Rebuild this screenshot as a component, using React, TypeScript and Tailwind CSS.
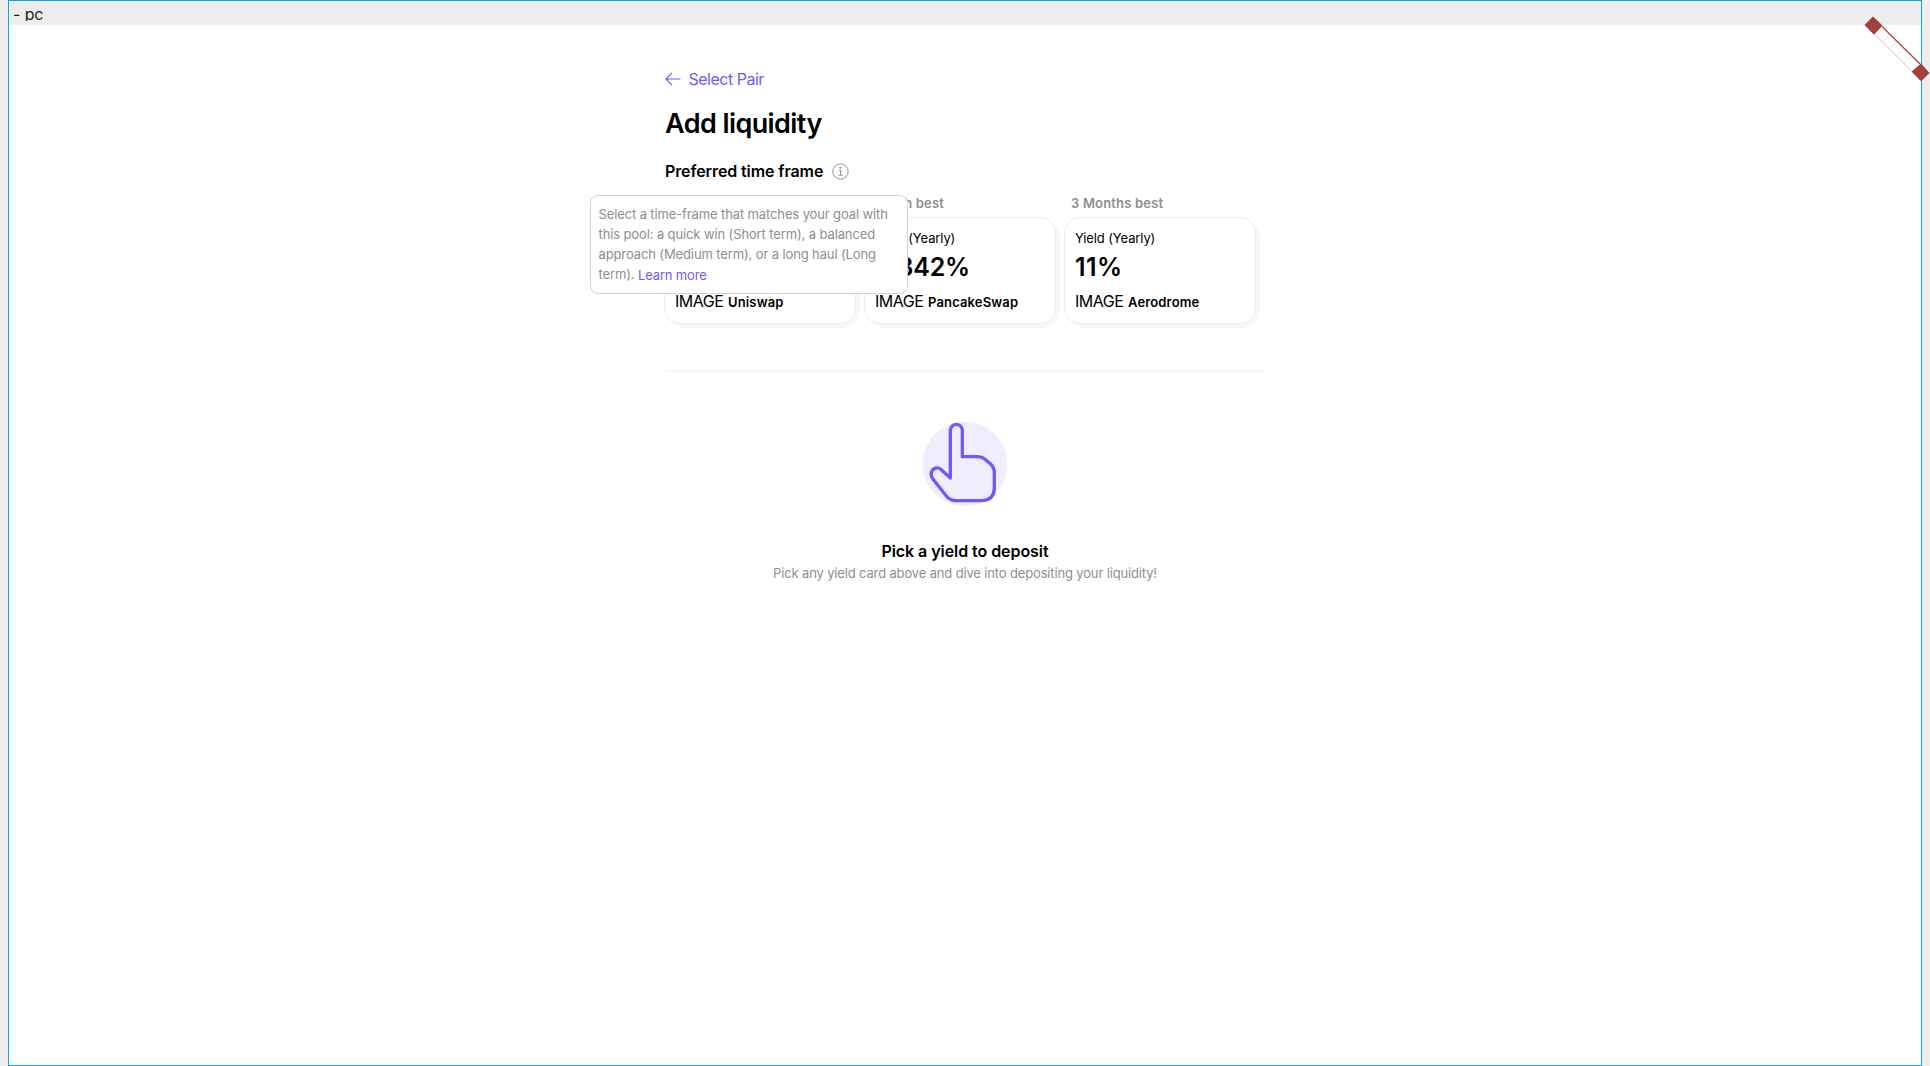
const cards = [
  { label: "Week best", value: "25%", name: "Uniswap" },
  { label: "Month best", value: "2.342%", name: "PancakeSwap" },
  { label: "3 Months best", value: "11%", name: "Aerodrome" },
];

function YieldCard({ label, value, name }: { label: string; value: string; name: string }) {
  return (
    <div className="w-48">
      <div className="h-[22px] pl-[7px] text-[13px] leading-4 font-semibold tracking-[0.18px] whitespace-nowrap text-[#8e8e93]">{label}</div>
      <div className="h-[107px] rounded-2xl border border-[#ededf0] bg-white pt-2.5 pl-2.5 whitespace-nowrap shadow-[4px_4px_0_0_#f7f6fd]">
        <div className="text-[13px] leading-5 tracking-[-0.12px]">Yield (Yearly)</div>
        <div className={value === "11%" ? "mt-[3px] text-[25px] leading-8 font-semibold tracking-[0.4px]" : "mt-[3px] text-[25px] leading-8 font-semibold tracking-[-0.2px]"}>{value}</div>
        <div className="mt-1.5 flex items-baseline gap-[5px] leading-6">
          <span className="w-[48px] text-[16px] tracking-[-0.5px]">IMAGE</span>
          <span className="text-[13px] font-semibold tracking-[0.15px]">{name}</span>
        </div>
      </div>
    </div>
  );
}

function Tooltip() {
  return (
    <div className="absolute top-[36px] left-[-75.5px] z-10 h-[99px] w-[318px] rounded-lg border border-[#d1d1d6] bg-white pt-2 pl-2 text-[13px] leading-5 tracking-[-0.12px] whitespace-nowrap text-[#8e8e93]">
      Select a time-frame that matches your goal with
      <br />
      this pool: a quick win (Short term), a balanced
      <br />
      approach (Medium term), or a long haul (Long
      <br />
      term). <a className="relative top-px tracking-[-0.16px] text-[#7357ff]">Learn more</a>
    </div>
  );
}

export default function App() {
  return (
    <div className="relative h-[1066px] w-full overflow-hidden bg-[#ededed] px-2 font-['Inter',sans-serif] text-black">
      <div className="h-full w-[1914px] border border-[#0aa6f0] bg-white">
        <div className="h-6 bg-[#ededed]">
          <div className="h-5 overflow-hidden pl-1 text-[16px] leading-[26px] tracking-[-0.1px] text-[#222]">- pc</div>
        </div>
        <main className="mx-auto w-[600px] pt-[42px]">
          <a className="flex h-6 items-center text-[16px] leading-6 tracking-[-0.5px] text-[#7357ff]">
            <svg width="16" height="14" viewBox="0 0 16 14" fill="none" stroke="currentColor" strokeWidth="1.1" strokeLinecap="round" strokeLinejoin="round" className="mr-[7.5px]">
              <path d="M15 7H1M6.5 1.2 1 7l5.500 5.800" />
            </svg>
            Select Pair
          </a>
          <h1 className="mt-[17px] text-[27px] leading-8 font-semibold tracking-[-0.58px]">Add liquidity</h1>
          <div className="relative mt-[19px] flex h-6 items-center">
            <h2 className="w-[166.500px] text-[16px] leading-6 font-semibold tracking-[-0.1px] whitespace-nowrap">Preferred time frame</h2>
            <svg width="17" height="17" viewBox="0 0 17 17" fill="none" stroke="#8e8e93" strokeWidth="1">
              <circle cx="8.5" cy="8.500" r="7.700" />
              <path d="M7 7.300h1.700v4.800M6.600 12.200h4" strokeWidth="1.1" />
              <circle cx="8.400" cy="4.700" r="1" fill="#8e8e93" stroke="none" />
            </svg>
            <Tooltip />
          </div>
          <div className="mt-3 -ml-px flex gap-2">
            {cards.map((c) => (
              <YieldCard key={c.name} {...c} />
            ))}
          </div>
          <div className="mt-[46px] h-0.5 bg-[#f7f7f8]" />
          <section className="flex flex-col items-center">
            <svg width="130" height="120" viewBox="0 0 390 360" className="mt-7" fill="none">
              <circle cx="195" cy="192" r="127" fill="#f0edff" />
              <path
                d="M151 234V91a18 18 0 0 1 36 0V170H233Q246 170 254 177L271 191Q283 202 283 217V262Q283 302 243 302H168Q150 302 139 288L98 236C88 221 96 206 109 204Q117 203 124 209Z"
                stroke="#7357ff"
                strokeWidth="10"
                strokeLinejoin="round"
              />
            </svg>
            <h3 className="mt-[19px] text-[16px] leading-6 font-semibold tracking-[-0.06px]">Pick a yield to deposit</h3>
            <p className="text-[13px] leading-5 tracking-[-0.15px] text-[#8e8e93]">Pick any yield card above and dive into depositing your liquidity!</p>
          </section>
        </main>
      </div>
      <svg className="absolute top-0 right-0" width="90" height="110" viewBox="0 0 90 110">
        <path d="M35 34.500 71.500 71 79.500 64 43 27.500Z" fill="#fff" />
        <path d="m35 34.500 36.500 36.500" stroke="#d9bcbc" strokeWidth="1" />
        <path d="m42.500 41.500 6-5.500M49.500 48.500l6-5.500M56.500 55.500l6-5.500M64 63l6-5.500" stroke="#f1e4e0" strokeWidth=".8" />
        <path d="m42 26.500 38 37.500" stroke="#a04040" strokeWidth="1.2" />
        <path d="M33 16.500 42.500 25.500 34 34.800 24.500 25ZM81 63.500 89.500 73 81 81.300 71.500 71.500Z" fill="#a04040" />
      </svg>
    </div>
  );
}
